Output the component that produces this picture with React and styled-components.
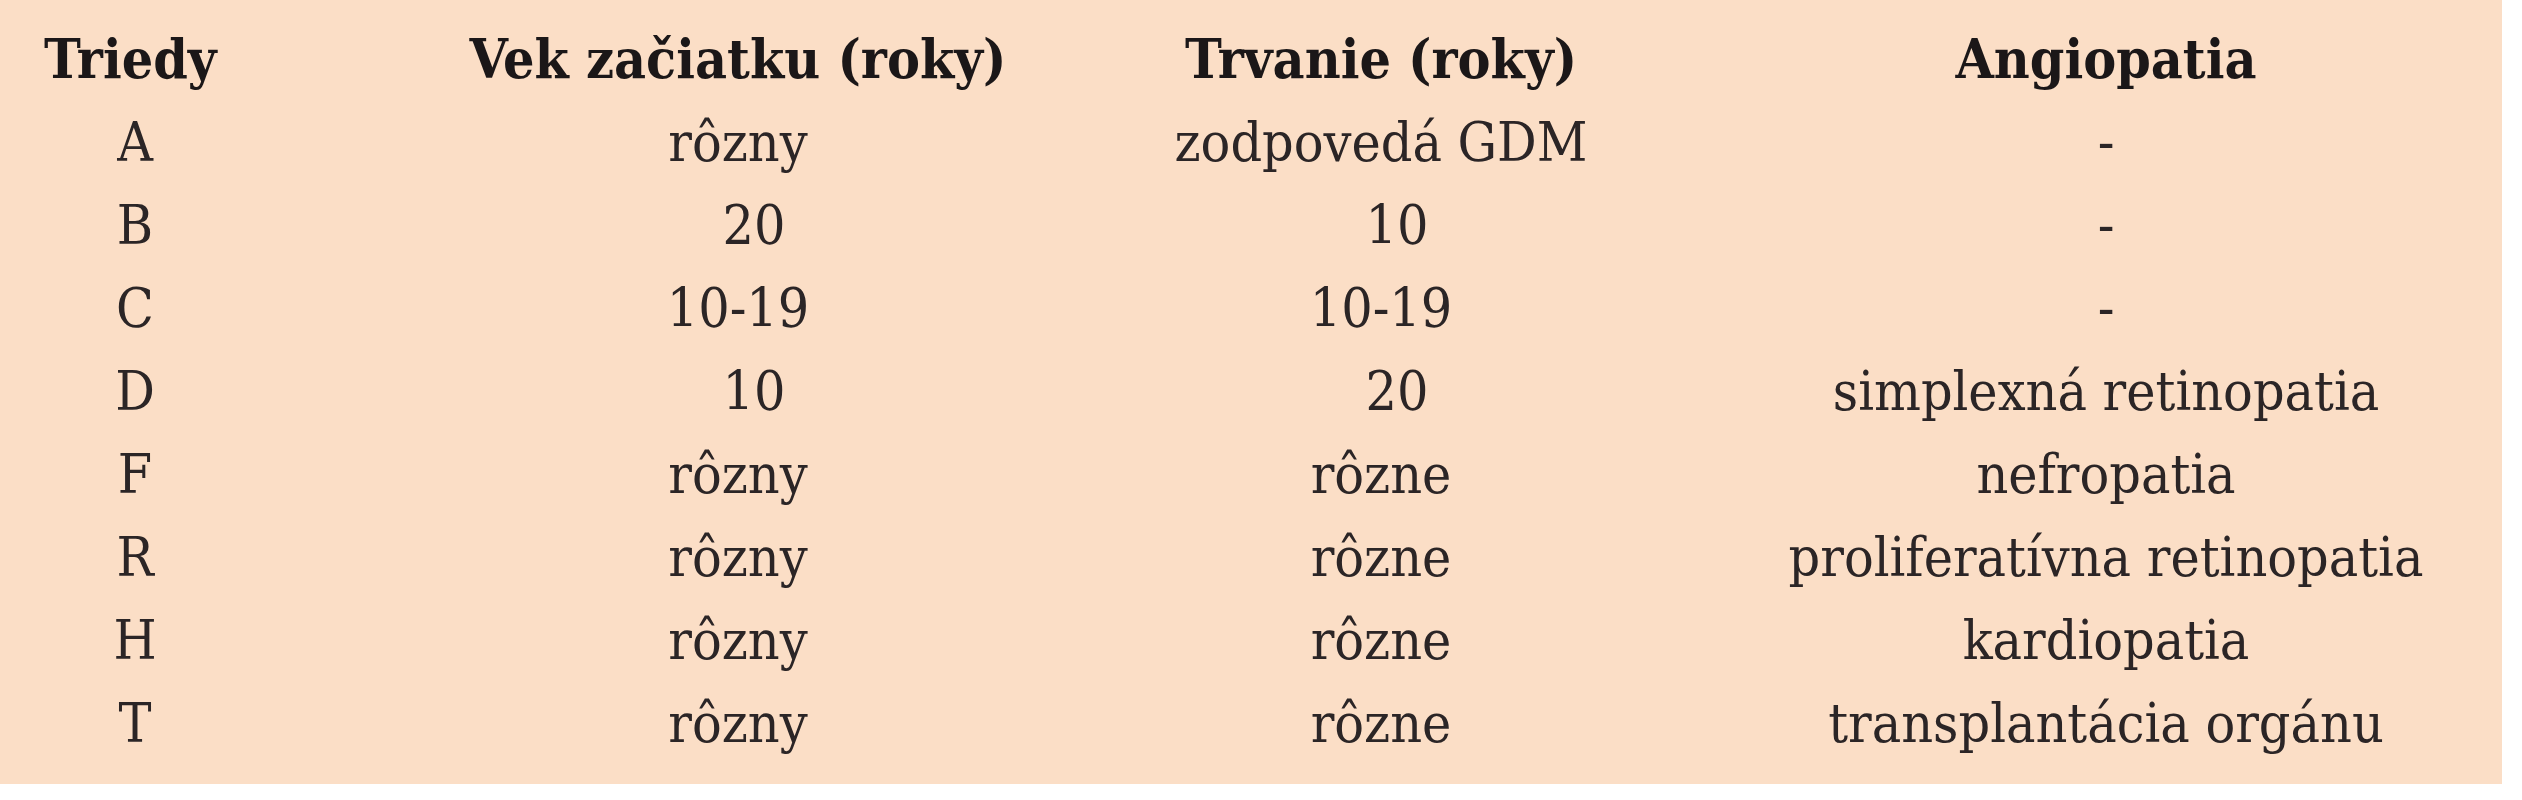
import React from "react";
import styled, { createGlobalStyle } from "styled-components";

const Global = createGlobalStyle`
  html, body { margin: 0; padding: 0; background: #ffffff; }
  #root { width: 2522px; }
`;

const Panel = styled.div`
  width: 2502px;
  box-sizing: border-box;
  background: #fbdec6;
  padding: 16px 0 19px 0;
  font-family: "DejaVu Serif Condensed", "DejaVu Serif", serif;
  font-stretch: condensed;
  color: #2b2526;
`;

const Row = styled.div`
  display: grid;
  grid-template-columns: 270px 628px 350px 792px;
  column-gap: 154px;
  height: ${(p) => (p.$head ? 85 : 83)}px;
  line-height: ${(p) => (p.$head ? 85 : 83)}px;
  font-size: 55px;
  font-weight: ${(p) => (p.$head ? 700 : 400)};
  color: ${(p) => (p.$head ? "#1b1718" : "#2b2526")};
`;

const Cell = styled.div`
  min-width: 0;
  display: flex;
  justify-content: ${(p) => (p.$left ? "flex-start" : "center")};
  padding-left: ${(p) => (p.$left ? "44px" : p.$shift ? "32px" : "0")};
  white-space: nowrap;
`;

const head = ["Triedy", "Vek začiatku (roky)", "Trvanie (roky)", "Angiopatia"];

const rows = [
  ["A", "rôzny", "zodpovedá GDM", "-"],
  ["B", "20", "10", "-", true],
  ["C", "10-19", "10-19", "-"],
  ["D", "10", "20", "simplexná retinopatia", true],
  ["F", "rôzny", "rôzne", "nefropatia"],
  ["R", "rôzny", "rôzne", "proliferatívna retinopatia"],
  ["H", "rôzny", "rôzne", "kardiopatia"],
  ["T", "rôzny", "rôzne", "transplantácia orgánu"],
];

export default function App() {
  return (
    <>
      <Global />
      <Panel>
        <Row $head>
          <Cell $left>{head[0]}</Cell>
          <Cell>{head[1]}</Cell>
          <Cell>{head[2]}</Cell>
          <Cell>{head[3]}</Cell>
        </Row>
        {rows.map((r) => (
          <Row key={r[0]}>
            <Cell>{r[0]}</Cell>
            <Cell $shift={r[4]}>{r[1]}</Cell>
            <Cell $shift={r[4]}>{r[2]}</Cell>
            <Cell>{r[3]}</Cell>
          </Row>
        ))}
      </Panel>
    </>
  );
}
